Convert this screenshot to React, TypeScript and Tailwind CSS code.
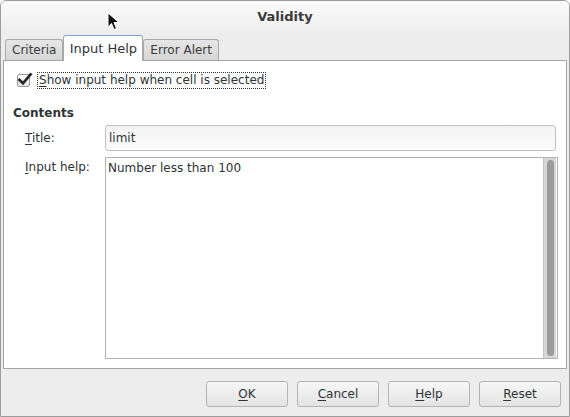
const font = { fontFamily: '"DejaVu Sans", "Liberation Sans", sans-serif' };

const Mn = ({ c }: { c: string }) => <span className="underline underline-offset-2">{c}</span>;

const Btn = ({ m, rest }: { m: string; rest: string }) => (
  <button className="w-[82px] h-[26px] rounded-[3px] border border-[#b4b4b4] bg-gradient-to-b from-[#f7f7f7] to-[#e3e3e3] text-[12px] text-[#2e3436] flex items-center justify-center">
    <span>
      <Mn c={m} />
      {rest}
    </span>
  </button>
);

export default function App() {
  return (
    <div style={font} className="relative w-[570px] h-[417px] bg-[#ededed] border border-[#9c9c9c] rounded-t-[6px] flex flex-col text-[12px] text-[#2e3436] overflow-hidden">
      {/* Title bar */}
      <div className="h-[34px] shrink-0 bg-gradient-to-b from-[#fbfbfb] to-[#ededed] flex items-center justify-center">
        <span className="font-bold text-[13px] text-[#3a3a3a] -mt-[3px]">Validity</span>
      </div>

      {/* Tabs */}
      <div className="h-[25px] shrink-0 flex items-end pl-[4px]">
        <div className="h-[21px] px-[6px] flex items-center border border-b-0 border-[#a9a9a9] rounded-t-[3px] bg-gradient-to-b from-[#e6e6e6] to-[#d6d6d6] text-[#3b3b3b]">
          Criteria
        </div>
        <div className="relative z-10 -mb-px h-[26px] w-[80px] flex items-center justify-center border border-b-0 border-[#a9a9a9] border-t-[#79a3d6] rounded-t-[3px] bg-white text-[13px] text-[#2e3436]">
          Input Help
        </div>
        <div className="h-[21px] px-[6px] flex items-center border border-b-0 border-[#a9a9a9] rounded-t-[3px] bg-gradient-to-b from-[#e6e6e6] to-[#d6d6d6] text-[#3b3b3b]">
          Error Alert
        </div>
      </div>

      {/* Panel */}
      <div className="mx-[2px] h-[309px] shrink-0 bg-white border border-[#a5a5a5] flex flex-col">
        <div className="flex items-center mt-[11px] ml-[13px]">
          <div className="w-[13px] h-[13px] border border-[#9a9a9a] rounded-[2px] bg-gradient-to-b from-[#ffffff] to-[#e6e6e6] flex items-center justify-center">
            <svg width="14" height="13" viewBox="0 0 14 13" className="-mt-[2px] ml-[2px] overflow-visible">
              <path d="M1.5 7 L5 10.3 L12.5 1.5" fill="none" stroke="#2a2a2a" strokeWidth="2.8" strokeLinecap="square" />
            </svg>
          </div>
          <div className="ml-[7px] px-px border border-dotted border-[#333] leading-[15px]">
            <Mn c="S" />how input help when cell is selected
          </div>
        </div>

        <div className="mt-[15px] ml-[9px] font-bold text-[#2e3436]">Contents</div>

        <div className="flex items-center mt-[3px] ml-[21px] mr-[10px]">
          <div className="w-[80px]">
            <Mn c="T" />itle:
          </div>
          <div className="flex-1 h-[26px] rounded-[3px] border border-[#c0c0c0] bg-gradient-to-b from-[#f3f3f3] to-[#fbfbfb] flex items-center px-[3px] text-[#2e3436]">
            limit
          </div>
        </div>

        <div className="flex items-start mt-[6px] ml-[21px] mr-[8px]">
          <div className="w-[80px] mt-[1px]">
            <Mn c="I" />nput help:
          </div>
          <div className="flex-1 h-[202px] border border-[#b3b3b3] bg-white flex">
            <div className="flex-1 px-[2px] pt-px">Number less than 100</div>
            <div className="w-[13px] bg-[#d6d6d6] border-l border-[#c4c4c4] flex justify-center py-[2px] mr-px">
              <div className="w-[7px] rounded-full bg-[#9b9b9b]" />
            </div>
          </div>
        </div>
      </div>

      {/* Buttons */}
      <div className="flex justify-end gap-[9px] pt-[12px] pr-[8px]">
        <Btn m="O" rest="K" />
        <Btn m="C" rest="ancel" />
        <Btn m="H" rest="elp" />
        <Btn m="R" rest="eset" />
      </div>

      {/* Mouse cursor */}
      <svg className="absolute left-[106px] top-[11px]" width="14" height="20" viewBox="0 0 14 20">
        <path d="M1 1 L1 15 L4.5 11.5 L7 17.5 L9.5 16.5 L7 10.5 L12 10.5 Z" fill="#111" stroke="#fff" strokeWidth="1" />
      </svg>
    </div>
  );
}
